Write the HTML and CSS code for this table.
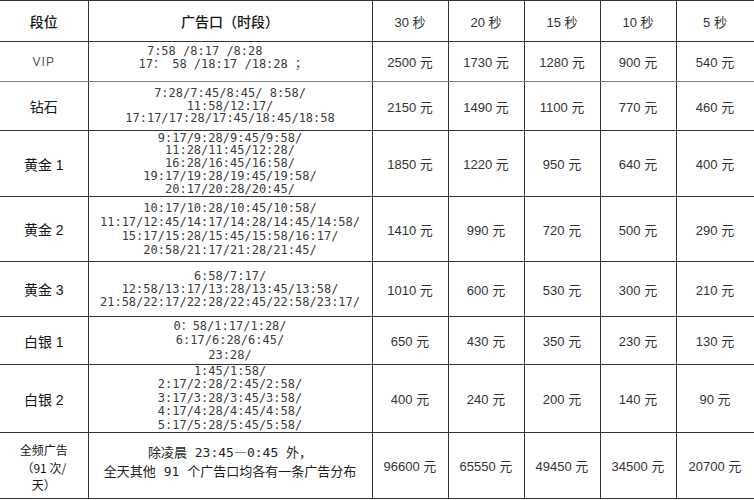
FILE: index.html
```html
<!DOCTYPE html>
<html lang="zh-CN">
<head>
<meta charset="utf-8">
<title>广告价格表</title>
<link rel="stylesheet" href="styles.css">
</head>
<body>
<table class="grid">
<colgroup>
<col class="c-seg"><col class="c-time"><col class="c-p"><col class="c-p"><col class="c-p"><col class="c-p"><col class="c-last">
</colgroup>
<tr class="r-head">
<th class="seg">段位</th>
<th class="head-time">广告口（时段）</th>
<th class="p">30 秒</th>
<th class="p">20 秒</th>
<th class="p">15 秒</th>
<th class="p">10 秒</th>
<th class="p">5 秒</th>
</tr>
<tr class="r-vip">
<td class="seg vip">VIP</td>
<td class="time lh-vip"><div class="up">7:58 /8:17 /8:28       <br>17： 58 /18:17 /18:28 ；  </div></td>
<td class="p">2500 元</td><td class="p">1730 元</td><td class="p">1280 元</td><td class="p">900 元</td><td class="p">540 元</td>
</tr>
<tr class="r-zs">
<td class="seg">钻石</td>
<td class="time lh-zs">7:28/7:45/8:45/ 8:58/<br>11:58/12:17/<br>17:17/17:28/17:45/18:45/18:58</td>
<td class="p">2150 元</td><td class="p">1490 元</td><td class="p">1100 元</td><td class="p">770 元</td><td class="p">460 元</td>
</tr>
<tr class="r-g1">
<td class="seg">黄金 1</td>
<td class="time lh-g1">9:17/9:28/9:45/9:58/<br>11:28/11:45/12:28/<br>16:28/16:45/16:58/<br>19:17/19:28/19:45/19:58/<br>20:17/20:28/20:45/</td>
<td class="p">1850 元</td><td class="p">1220 元</td><td class="p">950 元</td><td class="p">640 元</td><td class="p">400 元</td>
</tr>
<tr class="r-g2">
<td class="seg">黄金 2</td>
<td class="time lh-g2">10:17/10:28/10:45/10:58/<br>11:17/12:45/14:17/14:28/14:45/14:58/<br>15:17/15:28/15:45/15:58/16:17/<br>20:58/21:17/21:28/21:45/</td>
<td class="p">1410 元</td><td class="p">990 元</td><td class="p">720 元</td><td class="p">500 元</td><td class="p">290 元</td>
</tr>
<tr class="r-g3">
<td class="seg">黄金 3</td>
<td class="time lh-g3">6:58/7:17/<br>12:58/13:17/13:28/13:45/13:58/<br>21:58/22:17/22:28/22:45/22:58/23:17/</td>
<td class="p">1010 元</td><td class="p">600 元</td><td class="p">530 元</td><td class="p">300 元</td><td class="p">210 元</td>
</tr>
<tr class="r-b1">
<td class="seg">白银 1</td>
<td class="time lh-b1">0：58/1:17/1:28/<br>6:17/6:28/6:45/<br>23:28/</td>
<td class="p">650 元</td><td class="p">430 元</td><td class="p">350 元</td><td class="p">230 元</td><td class="p">130 元</td>
</tr>
<tr class="r-b2">
<td class="seg">白银 2</td>
<td class="time lh-b2">1:45/1:58/<br>2:17/2:28/2:45/2:58/<br>3:17/3:28/3:45/3:58/<br>4:17/4:28/4:45/4:58/<br>5:17/5:28/5:45/5:58/</td>
<td class="p">400 元</td><td class="p">240 元</td><td class="p">200 元</td><td class="p">140 元</td><td class="p">90 元</td>
</tr>
<tr class="r-all">
<td class="seg all">全频广告<br>（91 次/<br>天）</td>
<td class="note"><div class="up">除凌晨 23:45<span class="dash">—</span>0:45 外，<br>全天其他 91 个广告口均各有一条广告分布</div></td>
<td class="p">96600 元</td><td class="p">65550 元</td><td class="p">49450 元</td><td class="p">34500 元</td><td class="p">20700 元</td>
</tr>
</table>
</body>
</html>
```

FILE: styles.css
```css
body {
  margin: 0;
  background: #ffffff;
}

.grid {
  border-collapse: collapse;
  table-layout: fixed;
  width: 754px;
  font-family: "Liberation Sans", "Noto Sans CJK SC", sans-serif;
  color: #1e1e1e;
}

.c-seg { width: 88px; }
.c-time { width: 284px; }
.c-p { width: 76px; }
.c-last { width: 78px; }

.grid th,
.grid td {
  border: 1px solid #333333;
  padding: 0;
  text-align: center;
  vertical-align: middle;
  font-weight: normal;
}

.grid th:first-child,
.grid td:first-child {
  border-left: none;
}

.r-head { height: 41px; }
.r-vip { height: 40px; }
.r-zs { height: 49px; }
.r-g1 { height: 66px; }
.r-g2 { height: 65px; }
.r-g3 { height: 55px; }
.r-b1 { height: 48px; }
.r-b2 { height: 67px; }
.r-all { height: 66px; }

.r-vip td { border-bottom-color: #808080; }

.seg {
  font-size: 14px;
  font-weight: 500;
  color: #161616;
}

.grid th.seg,
.grid th.head-time {
  font-weight: 500;
  font-size: 14px;
  color: #161616;
}

.vip {
  font-size: 12px;
  letter-spacing: 1px;
  color: #555555;
}

.grid td.seg.vip {
  font-weight: normal;
}

.grid td.all {
  font-family: "Noto Sans CJK SC", sans-serif;
  font-size: 12px;
  line-height: 17.5px;
  padding-top: 4px;
}

.p {
  font-size: 13px;
  color: #333333;
}

.grid th.p {
  color: #333333;
}

.time {
  font-family: "DejaVu Sans Mono", "Noto Sans CJK SC", monospace;
  font-size: 12px;
  color: #3c3c3c;
  white-space: pre;
}

.up {
  position: relative;
  top: -4px;
}

.lh-vip { line-height: 13px; }
.lh-zs { line-height: 12.5px; }
.lh-g1 { line-height: 12.8px; }
.lh-g2 { line-height: 14.2px; }
.lh-g3 { line-height: 13px; }
.lh-b1 { line-height: 14.5px; }
.lh-b2 { line-height: 13.4px; }

.note {
  font-family: "DejaVu Sans Mono", "Noto Sans CJK SC", monospace;
  font-size: 13px;
  line-height: 19px;
  color: #1e1e1e;
}

.dash {
  font-family: "Noto Sans CJK SC", sans-serif;
}
```
